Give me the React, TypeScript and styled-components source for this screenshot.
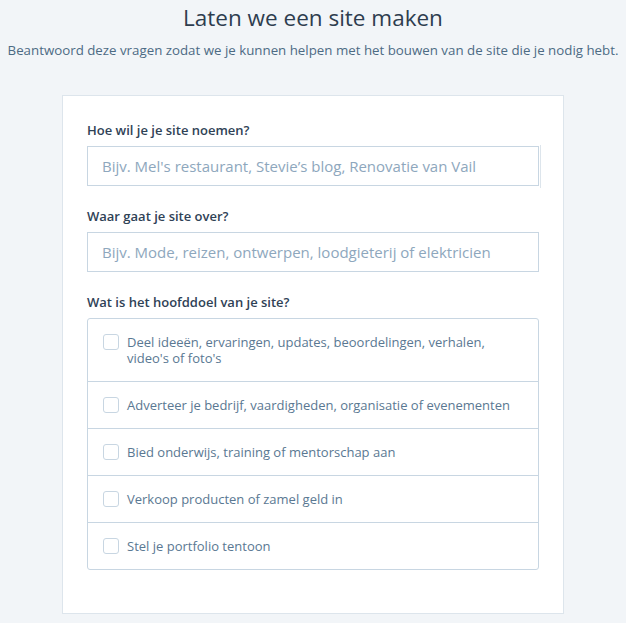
import React from 'react'
import styled, { createGlobalStyle } from 'styled-components'

const GlobalStyle = createGlobalStyle`
  html, body {
    margin: 0;
    padding: 0;
    background: #f2f5f8;
  }
  body {
    font-family: 'Open Sans', 'Noto Sans', sans-serif;
  }
  * {
    box-sizing: border-box;
  }
`

const Page = styled.div`
  display: flex;
  flex-direction: column;
  align-items: center;
  padding-top: 3px;
`

const Title = styled.h1`
  margin: 0;
  font-size: 22.5px;
  line-height: 30px;
  font-weight: 400;
  color: #2e3d4f;
`

const Subtitle = styled.p`
  margin: 8px 0 0;
  font-size: 13.3px;
  line-height: 18px;
  color: #4d6b84;
  white-space: nowrap;
`

const Card = styled.form`
  margin-top: 36px;
  width: 502px;
  background: #fff;
  border: 1px solid #dde5ec;
  padding: 26px 24px 43px;
`

const Field = styled.div`
  display: flex;
  flex-direction: column;
  gap: 7px;
  & + & {
    margin-top: 22px;
  }
`

const Label = styled.label`
  font-size: 13px;
  line-height: 17px;
  font-weight: 600;
  color: #2f4256;
`

const InputWrap = styled.div`
  position: relative;
`

const Input = styled.input`
  display: block;
  width: 100%;
  height: 40px;
  border: 1px solid #c8d6e2;
  border-radius: 0;
  padding: 0 14px;
  font-family: inherit;
  font-size: 15px;
  color: #2f4256;
  background: #fff;
  outline: none;
  &::placeholder {
    color: #8ea7bd;
  }
`

const Edge = styled.span`
  position: absolute;
  right: -2px;
  top: -1px;
  bottom: -2px;
  width: 1px;
  background: #dde5ec;
`

const Options = styled.div`
  border: 1px solid #c8d6e2;
  border-radius: 3px;
  background: #fff;
`

const Option = styled.label`
  display: flex;
  align-items: flex-start;
  gap: 8px;
  padding: 15px;
  cursor: pointer;
  & + & {
    border-top: 1px solid #c8d6e2;
  }
`

const Box = styled.span`
  flex: none;
  width: 16px;
  height: 16px;
  border: 1px solid #c8d6e2;
  border-radius: 3px;
  background: #fff;
`

const OptionText = styled.span`
  font-size: 13px;
  line-height: 16px;
  color: #5a7892;
  padding-right: 8px;
`

const goals = [
  "Deel ideeën, ervaringen, updates, beoordelingen, verhalen, video's of foto's",
  'Adverteer je bedrijf, vaardigheden, organisatie of evenementen',
  'Bied onderwijs, training of mentorschap aan',
  'Verkoop producten of zamel geld in',
  'Stel je portfolio tentoon',
]

const App = () => {
  return (
    <>
      <GlobalStyle />
      <Page>
        <Title>Laten we een site maken</Title>
        <Subtitle>Beantwoord deze vragen zodat we je kunnen helpen met het bouwen van de site die je nodig hebt.</Subtitle>
        <Card onSubmit={(e) => e.preventDefault()}>
          <Field>
            <Label htmlFor="site-name">Hoe wil je je site noemen?</Label>
            <InputWrap>
              <Input id="site-name" placeholder="Bijv. Mel's restaurant, Stevie’s blog, Renovatie van Vail" />
              <Edge />
            </InputWrap>
          </Field>
          <Field>
            <Label htmlFor="site-topic">Waar gaat je site over?</Label>
            <Input id="site-topic" placeholder="Bijv. Mode, reizen, ontwerpen, loodgieterij of elektricien" />
          </Field>
          <Field>
            <Label as="span">Wat is het hoofddoel van je site?</Label>
            <Options>
              {goals.map((g) => (
                <Option key={g}>
                  <Box />
                  <OptionText>{g}</OptionText>
                </Option>
              ))}
            </Options>
          </Field>
        </Card>
      </Page>
    </>
  )
}

export default App
